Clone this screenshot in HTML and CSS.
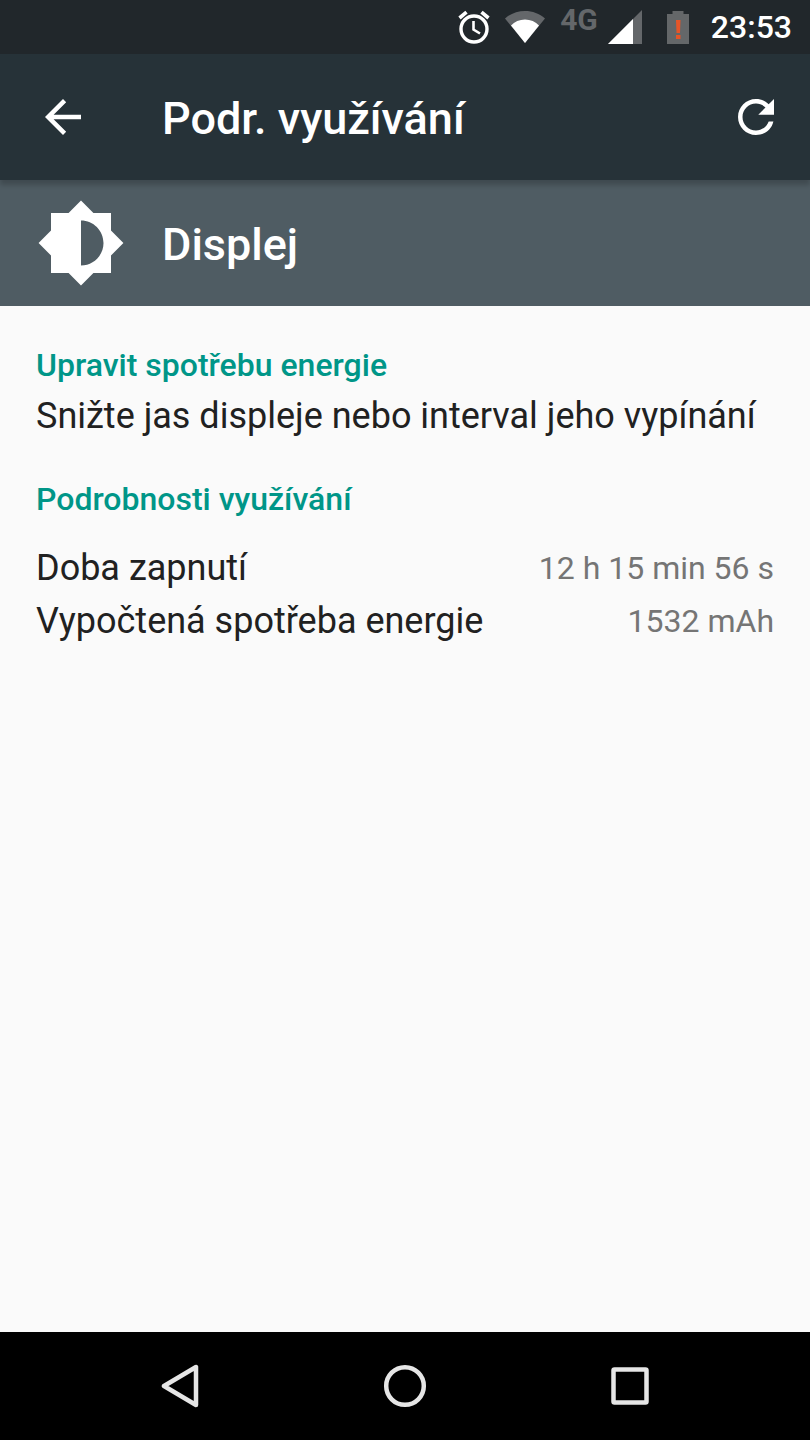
FILE: index.html
```html
<!DOCTYPE html>
<html lang="cs">

<head>
  <meta charset="UTF-8">
  <meta name="viewport" content="width=device-width, initial-scale=1.0">
  <title>Podr. využívání</title>
  <link rel="stylesheet" href="styles.css">
</head>

<body>
  <!-- Status bar -->
  <div class="status-bar">
    <svg class="alarm" width="34" height="36" viewBox="0 0 34 36" fill="none" stroke="#fff">
      <circle cx="17" cy="20" r="13" stroke-width="3.4" />
      <path d="M16.5 12v8.5l6.5 4" stroke-width="2.6" />
      <path d="M2.500 9l7-5.800M31.500 9l-7-5.800" stroke-width="3.6" />
    </svg>
    <svg class="wifi" width="40" height="34" viewBox="0 0 40 34">
      <path d="M20 33L0 8.500C5.500 3.500 12.500 1 20 1s14.500 2.500 20 7.500z" fill="#64676a" />
      <path d="M20 33L6 15.500C9.500 11.500 14.500 9.500 20 9.500s10.500 2 14 6z" fill="#fff" />
    </svg>
    <span class="network">4G</span>
    <svg class="signal" width="34" height="34" viewBox="0 0 34 34">
      <path d="M0 34L34 0v34z" fill="#64676a" />
      <path d="M0 34L25 9v25z" fill="#fff" />
    </svg>
    <svg class="battery" width="22" height="33" viewBox="0 0 22 33">
      <path d="M0 3h5.500V0h11v3H22v30H0z" fill="#646769" />
      <path d="M9 9h4.500l-.5 13h-3.500zM9 24h4.500v4H9z" fill="#e65528" />
    </svg>
    <span class="clock">23:53</span>
  </div>

  <!-- Toolbar -->
  <header class="toolbar">
    <button class="icon-button" aria-label="Zpět">
      <svg width="54" height="54" viewBox="0 0 24 24" fill="#fff">
        <path d="M20 11H7.830l5.590-5.590L12 4l-8 8 8 8 1.410-1.410L7.830 13H20v-2z" />
      </svg>
    </button>
    <h1>Podr. využívání</h1>
    <button class="icon-button" aria-label="Obnovit">
      <svg width="54" height="54" viewBox="0 0 24 24" fill="#fff">
        <path d="M17.650 6.350C16.200 4.900 14.210 4 12 4c-4.420 0-7.990 3.580-7.990 8s3.570 8 7.990 8c3.730 0 6.840-2.200 7.730-6h-2.080c-.82 2.330-3.040 4-5.650 4-3.310 0-6-2.690-6-6s2.690-6 6-6c1.660 0 3.140.69 4.220 1.780L13 11h7V4l-2.350 2.350z" />
      </svg>
    </button>
  </header>

  <!-- Usage item -->
  <div class="item-header">
    <svg width="90" height="90" viewBox="0 0 24 24" fill="#fff">
      <path d="M20 15.310L23.310 12 20 8.690V4h-4.690L12 .69 8.690 4H4v4.690L.69 12 4 15.310V20h4.690L12 23.310 15.310 20H20v-4.690zM12 18V6c3.310 0 6 2.690 6 6s-2.690 6-6 6z" />
    </svg>
    <h2>Displej</h2>
  </div>

  <main class="content">
    <section class="section">
      <h3>Upravit spotřebu energie</h3>
      <p>Snižte jas displeje nebo interval jeho vypínání</p>
    </section>

    <section class="section">
      <h3>Podrobnosti využívání</h3>
      <table class="details">
        <tr>
          <th scope="row">Doba zapnutí</th>
          <td>12 h 15 min 56 s</td>
        </tr>
        <tr>
          <th scope="row">Vypočtená spotřeba energie</th>
          <td>1532 mAh</td>
        </tr>
      </table>
    </section>
  </main>

  <!-- Navigation bar -->
  <nav class="nav-bar">
    <button class="nav-button" aria-label="Zpět">
      <svg width="44" height="44" viewBox="0 0 44 44">
        <path d="M38 3v38L6 22z" />
      </svg>
    </button>
    <button class="nav-button" aria-label="Domů">
      <svg width="44" height="44" viewBox="0 0 44 44">
        <circle cx="22" cy="22" r="18.800" />
      </svg>
    </button>
    <button class="nav-button" aria-label="Poslední aplikace">
      <svg width="44" height="44" viewBox="0 0 44 44">
        <rect x="5.500" y="5.500" width="33" height="33" rx="1" />
      </svg>
    </button>
  </nav>
</body>

</html>
```

FILE: styles.css
```css
* {
  box-sizing: border-box;
}

body {
  font-family: Roboto, Arial, sans-serif;
  background-color: #fafafa;
  color: #212121;
  margin: 0;
  min-height: 100vh;
  display: flex;
  flex-direction: column;
}

h1,
h2,
h3,
p {
  margin: 0;
}

svg {
  display: block;
  flex-shrink: 0;
}

button {
  background: none;
  border: none;
  padding: 0;
  cursor: pointer;
}

.status-bar {
  background-color: #21272b;
  color: #fff;
  height: 54px;
  padding: 0 18px;
  display: flex;
  align-items: center;
  justify-content: flex-end;
}

.wifi {
  margin-left: 14px;
}

.network {
  color: #64676a;
  font-size: 30px;
  font-weight: 700;
  line-height: 28px;
  margin: 0 10px 14px 15px;
}

.battery {
  margin-left: 25px;
}

.clock {
  font-size: 32px;
  font-weight: 500;
  margin-left: 22px;
}

.toolbar {
  background-color: #263238;
  color: #fff;
  height: 126px;
  padding: 0 27px 0 36px;
  display: flex;
  align-items: center;
  box-shadow: 0 5px 5px rgba(0, 0, 0, 0.2);
  z-index: 1;
}

.toolbar h1,
.item-header h2 {
  font-size: 45px;
  font-weight: 500;
  padding-top: 2px;
}

.toolbar h1 {
  flex: 1;
  margin-left: 72px;
}

.item-header {
  background-color: #4f5c63;
  color: #fff;
  height: 126px;
  padding: 0 36px;
  display: flex;
  align-items: center;
  gap: 36px;
}

.content {
  flex: 1;
  padding: 36px;
}

.section {
  margin-bottom: 32px;
}

.section h3 {
  color: #009688;
  font-size: 32px;
  font-weight: 500;
  line-height: 46px;
}

.section p {
  font-size: 36px;
  line-height: 56px;
}

.details {
  width: 100%;
  margin-top: 20px;
  border-collapse: collapse;
}

.details th,
.details td {
  padding: 0;
  line-height: 53px;
}

.details th {
  font-size: 36px;
  font-weight: 400;
  text-align: left;
}

.details td {
  color: #757575;
  font-size: 32px;
  text-align: right;
}

.nav-bar {
  background-color: #000;
  height: 108px;
  padding: 0 calc(100% / 12);
  display: grid;
  grid-template-columns: repeat(3, 1fr);
}

.nav-button {
  display: flex;
  align-items: center;
  justify-content: center;
}

.nav-button svg {
  fill: none;
  stroke: #e6e6e6;
  stroke-width: 4.5;
  stroke-linejoin: round;
}
```
